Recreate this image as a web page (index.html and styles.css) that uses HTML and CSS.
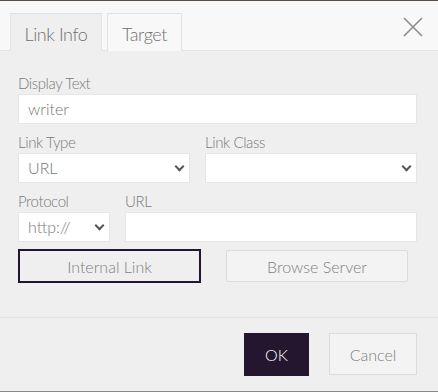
FILE: index.html
```html
<!DOCTYPE html>
<html lang="en">
<head>
  <meta charset="UTF-8" />
  <title>Link</title>
  <link rel="stylesheet" href="styles.css">
</head>
<body>
  <div class="dialog">
    <div class="header">
      <div class="tab active">Link Info</div>
      <div class="tab target">Target</div>
      <button class="close" aria-label="Close">
        <svg width="20" height="20" viewBox="0 0 20 20"><path d="M1 1 L19 19 M19 1 L1 19" stroke="#8c8c8c" stroke-width="1.6" fill="none"/></svg>
      </button>
    </div>

    <div class="body">
      <div class="field">
        <label>Display Text</label>
        <div class="input">writer</div>
      </div>

      <div class="row">
        <div class="field half">
          <label>Link Type</label>
          <div class="input select">URL<span class="caret"></span></div>
        </div>
        <div class="field half">
          <label>Link Class</label>
          <div class="input select"><span class="caret"></span></div>
        </div>
      </div>

      <div class="row">
        <div class="field protocol">
          <label>Protocol</label>
          <div class="input select">http://<span class="caret"></span></div>
        </div>
        <div class="field grow">
          <label>URL</label>
          <div class="input"></div>
        </div>
      </div>

      <div class="row buttons">
        <button class="btn internal">Internal Link</button>
        <button class="btn browse">Browse Server</button>
      </div>
    </div>

    <div class="footer">
      <button class="btn ok">OK</button>
      <button class="btn cancel">Cancel</button>
    </div>
  </div>
</body>
</html>
```

FILE: styles.css
```css
body {
  margin: 0;
  background: #efefef;
  font-family: 'Lato Light', Lato, 'Open Sans', sans-serif;
  font-weight: 300;
  color: #777;
}
.dialog {
  width: 438px;
  height: 392px;
  border-top: 1px solid #5a5048;
  box-sizing: border-box;
  display: flex;
  flex-direction: column;
}
.header {
  height: 49px;
  background: #f8f8f8;
  border-bottom: 1px solid #e3e3e3;
  display: flex;
  align-items: flex-end;
  padding-left: 10px;
  position: relative;
}
.tab {
  box-sizing: border-box;
  width: 92px;
  height: 38px;
  line-height: 40px;
  text-align: center;
  font-size: 18px;
  letter-spacing: -0.4px;
  color: #707070;
  border: 1px solid #e2e2e2;
  border-bottom: none;
  margin-right: 5px;
  margin-bottom: -1px;
  background: #f8f8f8;
}
.tab.active {
  background: #efefef;
}
.tab.target {
  width: 75px;
}
.close {
  position: absolute;
  right: 15px;
  top: 16px;
  border: none;
  background: none;
  padding: 0;
  width: 20px;
  height: 20px;
}
.body {
  box-sizing: border-box;
  padding: 23px 21px 0 18px;
  height: 267px;
  border-bottom: 1px solid #e4e4e4;
}
.field {
  display: flex;
  flex-direction: column;
  flex: none;
}
.field label {
  font-size: 15px;
  letter-spacing: -0.4px;
  line-height: 19px;
  color: #7a7a7a;
  margin-bottom: 1px;
}
.input {
  height: 28px;
  background: #fff;
  border: 1px solid #e6e6e6;
  font-size: 16px;
  line-height: 28px;
  padding: 0 9px;
  color: #777;
  position: relative;
}
.row {
  display: flex;
  gap: 15px;
  margin-top: 9px;
}
.half {
  width: 172px;
}
.half + .half {
  flex: 1;
}
.protocol {
  width: 92px;
}
.grow {
  flex: 1;
}
.caret {
  position: absolute;
  right: 6px;
  top: 9px;
  width: 5px;
  height: 5px;
  border-right: 2px solid #555;
  border-bottom: 2px solid #555;
  transform: rotate(45deg);
}
.buttons {
  margin-top: 7px;
  gap: 25px;
}
.btn {
  font-family: 'Lato Light', Lato, 'Open Sans', sans-serif;
  font-weight: 300;
  font-size: 16px;
  color: #808080;
  cursor: pointer;
}
.internal {
  width: 183px;
  height: 34px;
  background: #efefef;
  border: 2px solid #231530;
}
.browse {
  width: 182px;
  height: 32px;
  margin-top: 1px;
  background: #f3f3f3;
  border: 1px solid #dcdcdc;
  border-radius: 2px;
}
.footer {
  flex: 1;
  display: flex;
  justify-content: flex-end;
  align-items: flex-start;
  gap: 20px;
  padding: 15px 21px 0 0;
  border-bottom: 1px solid #8a8a8a;
}
.ok {
  width: 65px;
  height: 43px;
  background: #24162f;
  border: none;
  color: #fff;
}
.cancel {
  width: 88px;
  height: 42px;
  background: #f3f3f3;
  border: 1px solid #dcdcdc;
}
```
